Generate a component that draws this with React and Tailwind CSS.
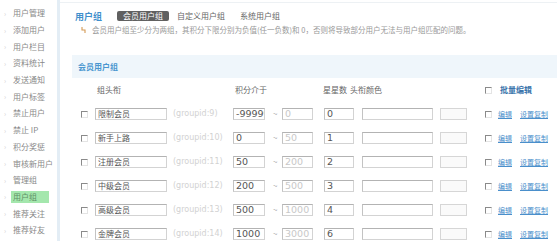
/**
 * 用户组 admin page
 * Sidebar menu + member group table
 */

const menu = [
  '用户管理', '添加用户', '用户栏目', '资料统计', '发送通知', '用户标签', '禁止用户',
  '禁止 IP', '积分奖惩', '审核新用户', '管理组', '用户组', '推荐关注', '推荐好友'
];

const groups = [
  { name: '限制会员', id: 9, min: '-99999', max: '0', stars: '0' },
  { name: '新手上路', id: 10, min: '0', max: '50', stars: '1' },
  { name: '注册会员', id: 11, min: '50', max: '200', stars: '2' },
  { name: '中级会员', id: 12, min: '200', max: '500', stars: '3' },
  { name: '高级会员', id: 13, min: '500', max: '1000', stars: '4' },
  { name: '金牌会员', id: 14, min: '1000', max: '3000', stars: '6' }
];

const cjk = { fontFamily: '"Noto Sans CJK SC", "Noto Sans", sans-serif' };
const latin = { fontFamily: '"DejaVu Sans", "Noto Sans CJK SC", sans-serif' };

function Check() {
  return (
    <span className="block w-[7px] h-[7px] shrink-0 bg-white border border-t-[#8a8a8a] border-l-[#8a8a8a] border-b-[#e4e4e4] border-r-[#e4e4e4]" />
  );
}

function Field({ width, children, muted, num }) {
  return (
    <div
      className={`h-[12px] shrink-0 overflow-hidden whitespace-nowrap bg-white border border-[#d3d3d3] border-t-[#b3b3b3] border-l-[#c3c3c3] pl-[2px] flex items-center ${
        num ? 'text-[9.5px]' : 'text-[8px]'
      } ${muted ? 'text-[#c8c8c8]' : 'text-[#555]'}`}
      style={{ width, ...(num ? latin : cjk) }}
    >
      {children}
    </div>
  );
}

export default function App() {
  return (
    <div className="flex w-[557px] h-[241px] overflow-hidden bg-white text-[8px] leading-none" style={cjk}>
      {/* Sidebar */}
      <aside className="w-[60px] shrink-0 border-r-[3px] border-[#e3edf5] pt-[5px]">
        {menu.map((item) => (
          <div key={item} className="h-[16.7px] flex items-center pl-[4px] text-[#888]">
            <span className="w-[9px] text-[#d2d2d2] text-[7px]">›</span>
            <span
              className={
                item === '用户组'
                  ? 'bg-[#a4e7ad] text-[#5f8f66] h-[12px] w-[38px] -ml-[2px] pl-[2px] flex items-center'
                  : ''
              }
            >
              {item}
            </span>
          </div>
        ))}
      </aside>

      {/* Main */}
      <main className="flex-1 pt-[2px]">
        <div className="border-t border-[#edf1f4]" />

        {/* Title + tabs */}
        <div className="mt-[5px] h-[16px] flex items-center pl-[15px] whitespace-nowrap">
          <span className="text-[9px] font-bold text-[#3f8fcc]">用户组</span>
          <span className="ml-[15px] h-[10px] px-[6px] flex items-center bg-[#606060] text-white rounded-[2px]">
            会员用户组
          </span>
          <span className="ml-[8px] text-[#666]">自定义用户组</span>
          <span className="ml-[15px] text-[#666]">系统用户组</span>
        </div>

        {/* Note */}
        <div className="h-[12px] flex items-center pl-[21px] whitespace-nowrap text-[#999] text-[7.5px]">
          <svg width="6" height="8" viewBox="0 0 6 8" className="shrink-0">
            <path d="M1 1 V4 H4 V7" stroke="#d49a55" strokeWidth="1.1" fill="none" />
          </svg>
          <span className="ml-[5px]">
            会员用户组至少分为两组，其积分下限分别为负值(任一负数)和 0，否则将导致部分用户无法与用户组匹配的问题。
          </span>
        </div>

        {/* Section header */}
        <div className="mt-[19px] ml-[12px] h-[23px] flex items-center pl-[6px] bg-[#eff6fb] text-[#4a96d0] font-bold">
          会员用户组
        </div>

        {/* Column headers */}
        <div className="h-[24px] flex items-center whitespace-nowrap text-[#666]">
          <span className="w-[175px] pl-[37px] shrink-0">组头衔</span>
          <span className="w-[88px] shrink-0">积分介于</span>
          <span className="w-[27px] shrink-0">星星数</span>
          <span className="w-[135px] shrink-0">头衔颜色</span>
          <Check />
          <span className="ml-[8px] font-bold text-[#3a74ab]">批量编辑</span>
        </div>

        {/* Rows */}
        {groups.map((g) => (
          <div key={g.id} className="h-[24px] flex items-center pl-[21px] whitespace-nowrap">
            <Check />
            <div className="ml-[7px]">
              <Field width={72}>{g.name}</Field>
            </div>
            <span className="w-[66px] shrink-0 pl-[6px] text-[#d2d2d2]" style={latin}>
              (groupid:{g.id})
            </span>
            <Field width={32} num>{g.min}</Field>
            <span className="w-[17px] shrink-0 pl-[8px] text-[#aaa]">~</span>
            <Field width={31} num muted>{g.max}</Field>
            <div className="ml-[11px]">
              <Field width={30} num>{g.stars}</Field>
            </div>
            <div className="ml-[8px]">
              <Field width={71} />
            </div>
            <div className="ml-[7px] w-[27px] h-[12px] shrink-0 border border-[#d6d6d6] bg-[#fafafa]" />
            <div className="ml-[18px]">
              <Check />
            </div>
            <a className="ml-[6px] text-[7px] text-[#4a8fcb] underline">编辑</a>
            <a className="ml-[8px] text-[7px] text-[#4a8fcb] underline">设置复制</a>
          </div>
        ))}
      </main>
    </div>
  );
}
